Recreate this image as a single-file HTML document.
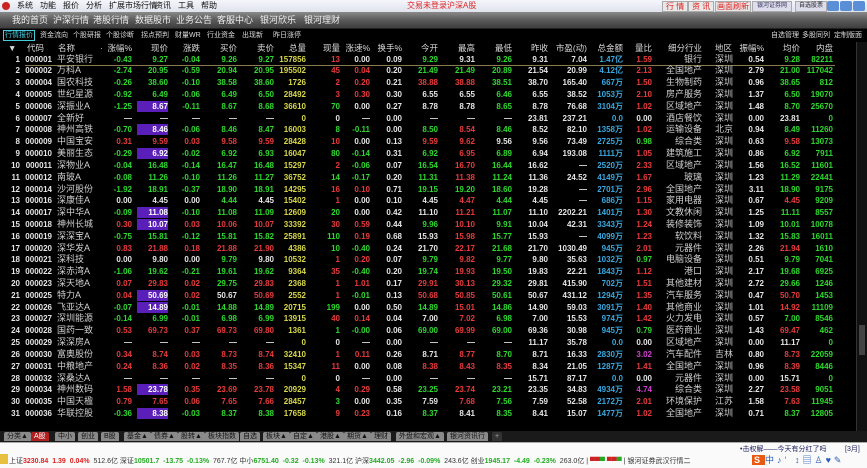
<!DOCTYPE html>
<html><head><meta charset="utf-8"><style>
*{margin:0;padding:0;box-sizing:border-box}
body{width:867px;height:468px;background:#000;overflow:hidden;position:relative;font-family:"Liberation Sans","Noto Sans CJK SC",sans-serif}
.menu{position:absolute;left:0;top:0;width:867px;height:12px;background:linear-gradient(#f4f6fb,#dfe3ec);font-size:8px;line-height:12px;color:#111}
.menu span{position:absolute;top:0;white-space:nowrap}
.tb{position:absolute;left:0;top:12px;width:867px;height:17px;background:linear-gradient(#8a8a8a,#5a5a5a 50%,#3e3e3e);border-bottom:1px solid #222}
.tb span{position:absolute;top:3px;font-size:9px;color:#f0f0f0;line-height:11px;white-space:nowrap}
.tabs{position:absolute;left:0;top:30px;width:867px;height:11px;font-size:7px;color:#ddd;line-height:11px}
.tabs span{position:absolute;top:0;white-space:nowrap}
.hdr{position:absolute;left:0;top:42px;width:867px;height:12px;font-size:8.5px;color:#d8d8d8;line-height:12px}
.hdr span,.row span{position:absolute;top:0;white-space:nowrap}
#tbl{position:absolute;left:0;top:53.6px;width:867px}
.row{position:relative;height:11.82px;line-height:11.82px;font-size:8px;font-weight:bold;color:#e6e6e6}
.row span:nth-child(3){font-weight:normal;font-size:9px;color:#d0d0d0}
.row span:nth-child(20),.row span:nth-child(21){font-weight:normal;font-size:9px;color:#d0d0d0}
.row span:nth-child(1){right:847px}.row span:nth-child(2){right:815px}.row span:nth-child(3){left:57px}
.row span:nth-child(4){right:735px}.row span:nth-child(5){right:699px}.row span:nth-child(6){right:667px}
.row span:nth-child(7){right:630px}.row span:nth-child(8){right:593px}.row span:nth-child(9){right:561px}
.row span:nth-child(10){right:527px}.row span:nth-child(11){right:497px}.row span:nth-child(12){right:465px}
.row span:nth-child(13){right:429px}.row span:nth-child(14){right:392px}.row span:nth-child(15){right:355px}
.row span:nth-child(16){right:319px}.row span:nth-child(17){right:280px}.row span:nth-child(18){right:244px}
.row span:nth-child(19){right:215px}.row span:nth-child(20){right:165px}.row span:nth-child(21){left:715px}
.row span:nth-child(22){right:103px}.row span:nth-child(23){right:67px}.row span:nth-child(24){right:34px}
.g{color:#2ed82e!important}.r{color:#e83a3a!important}.y{color:#d8d84a!important}.c{color:#3aa8e0!important}.m{color:#d040d0!important}
.row span.hl{background:#5a1fb8;width:31px;text-align:right;height:11px;color:#fff}
.line{position:absolute;left:25px;top:65px;width:810px;height:1px;background:#8a7a50}
.sb{position:absolute;left:856px;top:42px;width:11px;height:389px;background:#111;border-left:1px solid #333}
.btabs{position:absolute;left:0;top:431px;width:867px;height:11px;background:#1a1a1a;font-size:7px;line-height:9px}
.btabs span{position:absolute;top:1px;height:9px;background:#8a8a8a;color:#111;padding:0 3px;border-radius:2px 2px 0 0;white-space:nowrap}
.status{position:absolute;left:0;top:442px;width:867px;height:26px;background:#fafafa;border-top:1px solid #aaa}
.st{position:absolute;top:14px;font-size:7px;line-height:10px;color:#333;white-space:nowrap}
</style></head><body>
<div class="menu">
<span style="left:2px;top:2px;width:8px;height:8px;background:#c22;border-radius:50%"></span>
<span style="left:17px">系统</span><span style="left:40px">功能</span><span style="left:63px">报价</span><span style="left:86px">分析</span><span style="left:109px">扩展市场行情</span><span style="left:155px">资讯</span><span style="left:178px">工具</span><span style="left:201px">帮助</span>
<span style="left:407px;color:#d22">交易未登录</span><span style="left:447px;color:#d22">沪深A股</span>
<span style="left:662px;color:#d22;background:#e8e8e8;border:1px solid #aaa;line-height:9px;top:1px;padding:0 3px">行 情</span>
<span style="left:688px;color:#d22;background:#e8e8e8;border:1px solid #aaa;line-height:9px;top:1px;padding:0 3px">资 讯</span>
<span style="left:715px;color:#d22;background:#e8e8e8;border:1px solid #aaa;line-height:9px;top:1px;padding:0 1px">画面刷新</span>
<span style="left:752px;color:#335;background:#dde;border:1px solid #aaa;line-height:9px;top:1px;padding:0 4px;font-size:6px">银河证券网</span>
<span style="left:795px;color:#222;background:#dde;border:1px solid #aaa;line-height:9px;top:1px;padding:0 3px;font-size:6px">自选股票</span>
<span style="left:827px;top:1px;width:12px;height:10px;background:#5a8fd8;border-radius:2px"></span>
<span style="left:840px;top:1px;width:12px;height:10px;background:#5a8fd8;border-radius:2px"></span>
<span style="left:853px;top:1px;width:12px;height:10px;background:#5a8fd8;border-radius:2px"></span>
</div>
<div class="tb">
<span style="left:12px">我的首页</span><span style="left:53px">沪深行情</span><span style="left:93px">港股行情</span><span style="left:135px">数据股市</span><span style="left:176px">业务公告</span><span style="left:217px">客服中心</span><span style="left:260px">银河欣乐</span><span style="left:304px">银河理财</span>
</div>
<div class="tabs">
<span style="left:3px;color:#4cd;border:1px solid #4cd;line-height:9px;top:0;padding:0 1px">行情报价</span>
<span style="left:40px">资金流向</span><span style="left:73px">个股研报</span><span style="left:106px">个股诊断</span><span style="left:141px">拐点预判</span><span style="left:175px">财量WR</span><span style="left:207px">行业资金</span><span style="left:242px">出现新</span><span style="left:273px">昨日涨停</span>
<span style="left:771px">自选管理</span><span style="left:802px">多股同列</span><span style="left:834px">定制版面</span>
</div>
<div class="hdr">
<span style="left:8px">▼</span><span style="left:27px">代码</span><span style="left:58px">名称</span><span style="left:100px">·</span>
<span style="right:735px">涨幅%</span><span style="right:699px">现价</span><span style="right:667px">涨跌</span><span style="right:630px">买价</span><span style="right:593px">卖价</span><span style="right:561px">总量</span><span style="right:527px">现量</span><span style="right:497px">涨速%</span><span style="right:465px">换手%</span><span style="right:429px">今开</span><span style="right:392px">最高</span><span style="right:355px">最低</span><span style="right:319px">昨收</span><span style="right:280px">市盈(动)</span><span style="right:244px">总金额</span><span style="right:215px">量比</span><span style="right:165px">细分行业</span><span style="left:715px">地区</span><span style="right:103px">振幅%</span><span style="right:67px">均价</span><span style="right:34px">内盘</span>
</div>
<div class="line"></div>
<div id="tbl">
<div class="row"><span>1</span><span>000001</span><span>平安银行</span><span class="g">-0.43</span><span class="g">9.27</span><span class="g">-0.04</span><span class="g">9.26</span><span class="g">9.27</span><span class="y">157856</span><span class="r">13</span><span>0.00</span><span>0.09</span><span class="g">9.29</span><span>9.31</span><span class="g">9.26</span><span>9.31</span><span>7.04</span><span class="c">1.47亿</span><span class="r">1.59</span><span>银行</span><span>深圳</span><span>0.54</span><span class="g">9.28</span><span class="g">82211</span></div>
<div class="row"><span>2</span><span>000002</span><span>万科A</span><span class="g">-2.74</span><span class="g">20.95</span><span class="g">-0.59</span><span class="g">20.94</span><span class="g">20.95</span><span class="y">195502</span><span class="r">45</span><span class="r">0.04</span><span>0.20</span><span class="g">21.49</span><span class="g">21.49</span><span class="g">20.89</span><span>21.54</span><span>20.99</span><span class="c">4.12亿</span><span class="r">2.13</span><span>全国地产</span><span>深圳</span><span>2.79</span><span class="g">21.00</span><span class="g">117042</span></div>
<div class="row"><span>3</span><span>000004</span><span>国农科技</span><span class="g">-0.26</span><span class="g">38.60</span><span class="g">-0.10</span><span class="g">38.58</span><span class="g">38.60</span><span class="y">1726</span><span class="r">2</span><span class="r">0.20</span><span>0.21</span><span class="r">38.88</span><span class="r">38.88</span><span class="g">38.51</span><span>38.70</span><span>165.40</span><span class="c">667万</span><span class="r">1.50</span><span>生物制药</span><span>深圳</span><span>0.96</span><span class="g">38.65</span><span class="g">812</span></div>
<div class="row"><span>4</span><span>000005</span><span>世纪星源</span><span class="g">-0.92</span><span class="g">6.49</span><span class="g">-0.06</span><span class="g">6.49</span><span class="g">6.50</span><span class="y">28492</span><span class="r">3</span><span class="r">0.30</span><span>0.30</span><span>6.55</span><span>6.55</span><span class="g">6.46</span><span>6.55</span><span>38.52</span><span class="c">1053万</span><span class="r">2.10</span><span>房产服务</span><span>深圳</span><span>1.37</span><span class="g">6.50</span><span class="g">19070</span></div>
<div class="row"><span>5</span><span>000006</span><span>深振业A</span><span class="g">-1.25</span><span class="hl">8.67</span><span class="g">-0.11</span><span class="g">8.67</span><span class="g">8.68</span><span class="y">36610</span><span class="g">70</span><span>0.00</span><span>0.27</span><span>8.78</span><span>8.78</span><span class="g">8.65</span><span>8.78</span><span>76.68</span><span class="c">3104万</span><span class="r">1.02</span><span>区域地产</span><span>深圳</span><span>1.48</span><span class="g">8.70</span><span class="g">25670</span></div>
<div class="row"><span>6</span><span>000007</span><span>全新好</span><span>—</span><span>—</span><span>—</span><span>—</span><span>—</span><span class="y">0</span><span>0</span><span>—</span><span>0.00</span><span>—</span><span>—</span><span>—</span><span>23.81</span><span>237.21</span><span class="c">0.0</span><span>0.00</span><span>酒店餐饮</span><span>深圳</span><span>0.00</span><span>23.81</span><span class="g">0</span></div>
<div class="row"><span>7</span><span>000008</span><span>神州高铁</span><span class="g">-0.70</span><span class="hl">8.46</span><span class="g">-0.06</span><span class="g">8.46</span><span class="g">8.47</span><span class="y">16003</span><span class="g">8</span><span class="g">-0.11</span><span>0.00</span><span class="g">8.50</span><span class="r">8.54</span><span class="g">8.46</span><span>8.52</span><span>82.10</span><span class="c">1358万</span><span class="r">1.02</span><span>运输设备</span><span>北京</span><span>0.94</span><span class="g">8.49</span><span class="g">11260</span></div>
<div class="row"><span>8</span><span>000009</span><span>中国宝安</span><span class="r">0.31</span><span class="r">9.59</span><span class="r">0.03</span><span class="r">9.58</span><span class="r">9.59</span><span class="y">28428</span><span class="r">10</span><span>0.00</span><span>0.13</span><span class="r">9.59</span><span class="r">9.62</span><span>9.56</span><span>9.56</span><span>73.49</span><span class="c">2725万</span><span class="g">0.98</span><span>综合类</span><span>深圳</span><span>0.63</span><span class="r">9.58</span><span class="g">13073</span></div>
<div class="row"><span>9</span><span>000010</span><span>美丽生态</span><span class="g">-0.29</span><span class="hl">6.92</span><span class="g">-0.02</span><span class="g">6.92</span><span class="g">6.93</span><span class="y">16047</span><span class="g">80</span><span class="g">-0.14</span><span>0.31</span><span class="g">6.92</span><span class="r">6.95</span><span class="g">6.89</span><span>6.94</span><span>193.08</span><span class="c">1111万</span><span class="r">1.05</span><span>建筑施工</span><span>深圳</span><span>0.86</span><span class="g">6.92</span><span class="g">7911</span></div>
<div class="row"><span>10</span><span>000011</span><span>深物业A</span><span class="g">-0.04</span><span class="g">16.48</span><span class="g">-0.14</span><span class="g">16.47</span><span class="g">16.48</span><span class="y">15297</span><span class="r">2</span><span class="g">-0.06</span><span>0.07</span><span class="g">16.54</span><span class="r">16.70</span><span class="g">16.44</span><span>16.62</span><span>—</span><span class="c">2520万</span><span class="r">2.33</span><span>区域地产</span><span>深圳</span><span>1.56</span><span class="g">16.52</span><span class="g">11601</span></div>
<div class="row"><span>11</span><span>000012</span><span>南玻A</span><span class="g">-0.08</span><span class="g">11.26</span><span class="g">-0.10</span><span class="g">11.26</span><span class="g">11.27</span><span class="y">36752</span><span class="g">14</span><span class="g">-0.17</span><span>0.20</span><span class="g">11.31</span><span class="r">11.38</span><span class="g">11.24</span><span>11.36</span><span>24.52</span><span class="c">4149万</span><span class="r">1.67</span><span>玻璃</span><span>深圳</span><span>1.23</span><span class="g">11.29</span><span class="g">22441</span></div>
<div class="row"><span>12</span><span>000014</span><span>沙河股份</span><span class="g">-1.92</span><span class="g">18.91</span><span class="g">-0.37</span><span class="g">18.90</span><span class="g">18.91</span><span class="y">14295</span><span class="r">16</span><span class="r">0.10</span><span>0.71</span><span class="g">19.15</span><span class="g">19.20</span><span class="g">18.60</span><span>19.28</span><span>—</span><span class="c">2701万</span><span class="r">2.96</span><span>全国地产</span><span>深圳</span><span>3.11</span><span class="g">18.90</span><span class="g">9175</span></div>
<div class="row"><span>13</span><span>000016</span><span>深康佳A</span><span>0.00</span><span>4.45</span><span>0.00</span><span class="g">4.44</span><span>4.45</span><span class="y">15402</span><span class="r">1</span><span>0.00</span><span>0.10</span><span>4.45</span><span class="r">4.47</span><span class="g">4.44</span><span>4.45</span><span>—</span><span class="c">686万</span><span class="r">1.15</span><span>家用电器</span><span>深圳</span><span>0.67</span><span class="r">4.45</span><span class="g">9209</span></div>
<div class="row"><span>14</span><span>000017</span><span>深中华A</span><span class="g">-0.09</span><span class="hl">11.08</span><span class="g">-0.10</span><span class="g">11.08</span><span class="g">11.09</span><span class="y">12609</span><span class="g">20</span><span>0.00</span><span>0.42</span><span>11.10</span><span class="r">11.21</span><span class="g">11.07</span><span>11.10</span><span>2202.21</span><span class="c">1401万</span><span class="r">1.30</span><span>文教休闲</span><span>深圳</span><span>1.25</span><span class="g">11.11</span><span class="g">8557</span></div>
<div class="row"><span>15</span><span>000018</span><span>神州长城</span><span class="r">0.30</span><span class="hl">10.07</span><span class="r">0.03</span><span class="r">10.06</span><span class="r">10.07</span><span class="y">33392</span><span class="r">30</span><span class="r">0.59</span><span>0.44</span><span class="g">9.96</span><span class="r">10.10</span><span class="g">9.91</span><span>10.04</span><span>42.31</span><span class="c">3343万</span><span class="r">1.24</span><span>装修装饰</span><span>深圳</span><span>1.09</span><span class="g">10.01</span><span class="g">10078</span></div>
<div class="row"><span>16</span><span>000019</span><span>深深宝A</span><span class="g">-0.75</span><span class="g">15.81</span><span class="g">-0.12</span><span class="g">15.81</span><span class="g">15.82</span><span class="y">25891</span><span class="g">110</span><span class="r">0.19</span><span>0.68</span><span>15.93</span><span class="r">15.98</span><span class="g">15.77</span><span>15.93</span><span>—</span><span class="c">4099万</span><span class="r">1.23</span><span>软饮料</span><span>深圳</span><span>1.32</span><span class="g">15.83</span><span class="g">16011</span></div>
<div class="row"><span>17</span><span>000020</span><span>深华发A</span><span class="r">0.83</span><span class="r">21.88</span><span class="r">0.18</span><span class="r">21.88</span><span class="r">21.90</span><span class="y">4386</span><span class="g">10</span><span class="g">-0.40</span><span>0.24</span><span>21.70</span><span class="r">22.17</span><span class="g">21.68</span><span>21.70</span><span>1030.49</span><span class="c">945万</span><span class="r">2.01</span><span>元器件</span><span>深圳</span><span>2.26</span><span class="r">21.94</span><span class="g">1610</span></div>
<div class="row"><span>18</span><span>000021</span><span>深科技</span><span>0.00</span><span>9.80</span><span>0.00</span><span class="g">9.79</span><span>9.80</span><span class="y">10532</span><span class="r">1</span><span class="r">0.20</span><span>0.07</span><span class="g">9.79</span><span class="r">9.82</span><span class="g">9.77</span><span>9.80</span><span>35.63</span><span class="c">1032万</span><span class="g">0.97</span><span>电脑设备</span><span>深圳</span><span>0.51</span><span class="g">9.79</span><span class="g">7041</span></div>
<div class="row"><span>19</span><span>000022</span><span>深赤湾A</span><span class="g">-1.06</span><span class="g">19.62</span><span class="g">-0.21</span><span class="g">19.61</span><span class="g">19.62</span><span class="y">9364</span><span class="r">35</span><span class="g">-0.40</span><span>0.20</span><span class="g">19.74</span><span class="r">19.93</span><span class="g">19.50</span><span>19.83</span><span>22.21</span><span class="c">1843万</span><span class="r">1.12</span><span>港口</span><span>深圳</span><span>2.17</span><span class="g">19.68</span><span class="g">6925</span></div>
<div class="row"><span>20</span><span>000023</span><span>深天地A</span><span class="r">0.07</span><span class="r">29.83</span><span class="r">0.02</span><span class="g">29.75</span><span class="r">29.83</span><span class="y">2368</span><span class="r">1</span><span class="r">1.01</span><span>0.17</span><span class="r">29.91</span><span class="r">30.13</span><span class="g">29.32</span><span>29.81</span><span>415.90</span><span class="c">702万</span><span class="r">1.51</span><span>其他建材</span><span>深圳</span><span>2.72</span><span class="g">29.66</span><span class="g">1246</span></div>
<div class="row"><span>21</span><span>000025</span><span>特力A</span><span class="r">0.04</span><span class="hl">50.69</span><span class="r">0.02</span><span>50.67</span><span class="r">50.69</span><span class="y">2552</span><span class="r">1</span><span class="g">-0.01</span><span>0.13</span><span class="r">50.68</span><span class="r">50.85</span><span class="g">50.61</span><span>50.67</span><span>431.12</span><span class="c">1294万</span><span class="r">1.35</span><span>汽车服务</span><span>深圳</span><span>0.47</span><span class="r">50.70</span><span class="g">1453</span></div>
<div class="row"><span>22</span><span>000026</span><span>飞亚达A</span><span class="g">-0.07</span><span class="hl">14.89</span><span class="g">-0.01</span><span class="g">14.88</span><span class="g">14.89</span><span class="y">20715</span><span class="g">199</span><span>0.00</span><span>0.50</span><span class="g">14.89</span><span class="r">15.01</span><span class="g">14.86</span><span>14.90</span><span>59.03</span><span class="c">3091万</span><span class="r">1.40</span><span>其他商业</span><span>深圳</span><span>1.01</span><span class="r">14.92</span><span class="g">11109</span></div>
<div class="row"><span>23</span><span>000027</span><span>深圳能源</span><span class="g">-0.14</span><span class="g">6.99</span><span class="g">-0.01</span><span class="g">6.98</span><span class="g">6.99</span><span class="y">13915</span><span class="r">40</span><span class="r">0.14</span><span>0.04</span><span>7.00</span><span class="r">7.02</span><span class="g">6.98</span><span>7.00</span><span>15.53</span><span class="c">974万</span><span class="r">1.42</span><span>火力发电</span><span>深圳</span><span>0.57</span><span class="g">7.00</span><span class="g">8546</span></div>
<div class="row"><span>24</span><span>000028</span><span>国药一致</span><span class="r">0.53</span><span class="r">69.73</span><span class="r">0.37</span><span class="r">69.73</span><span class="r">69.80</span><span class="y">1361</span><span class="g">1</span><span class="g">-0.00</span><span>0.06</span><span class="g">69.00</span><span class="r">69.99</span><span class="g">69.00</span><span>69.36</span><span>30.98</span><span class="c">945万</span><span class="g">0.79</span><span>医药商业</span><span>深圳</span><span>1.43</span><span class="r">69.47</span><span class="g">462</span></div>
<div class="row"><span>25</span><span>000029</span><span>深深房A</span><span>—</span><span>—</span><span>—</span><span>—</span><span>—</span><span class="y">0</span><span>0</span><span>—</span><span>0.00</span><span>—</span><span>—</span><span>—</span><span>11.17</span><span>35.78</span><span class="c">0.0</span><span>0.00</span><span>区域地产</span><span>深圳</span><span>0.00</span><span>11.17</span><span class="g">0</span></div>
<div class="row"><span>26</span><span>000030</span><span>富奥股份</span><span class="r">0.34</span><span class="r">8.74</span><span class="r">0.03</span><span class="r">8.73</span><span class="r">8.74</span><span class="y">32410</span><span class="r">1</span><span class="r">0.11</span><span>0.26</span><span>8.71</span><span class="r">8.77</span><span class="g">8.70</span><span>8.71</span><span>16.33</span><span class="c">2830万</span><span class="m">3.02</span><span>汽车配件</span><span>吉林</span><span>0.80</span><span class="r">8.73</span><span class="g">22059</span></div>
<div class="row"><span>27</span><span>000031</span><span>中粮地产</span><span class="r">0.24</span><span class="r">8.36</span><span class="r">0.02</span><span class="r">8.35</span><span class="r">8.36</span><span class="y">15347</span><span class="r">11</span><span>0.00</span><span>0.08</span><span class="r">8.38</span><span class="r">8.43</span><span class="r">8.35</span><span>8.34</span><span>21.05</span><span class="c">1287万</span><span class="r">1.41</span><span>全国地产</span><span>深圳</span><span>0.96</span><span class="r">8.39</span><span class="g">8446</span></div>
<div class="row"><span>28</span><span>000032</span><span>深桑达A</span><span>—</span><span>—</span><span>—</span><span>—</span><span>—</span><span class="y">0</span><span>0</span><span>—</span><span>0.00</span><span>—</span><span>—</span><span>—</span><span>15.71</span><span>87.17</span><span class="c">0.0</span><span>0.00</span><span>元器件</span><span>深圳</span><span>0.00</span><span>15.71</span><span class="g">0</span></div>
<div class="row"><span>29</span><span>000034</span><span>神州数码</span><span class="r">1.58</span><span class="hl">23.78</span><span class="r">0.35</span><span class="r">23.69</span><span class="r">23.78</span><span class="y">20929</span><span class="r">4</span><span class="r">0.29</span><span>0.58</span><span class="g">23.25</span><span class="r">23.74</span><span class="g">23.21</span><span>23.35</span><span>34.83</span><span class="c">4934万</span><span class="m">4.74</span><span>综合类</span><span>深圳</span><span>2.27</span><span class="r">23.58</span><span class="g">9051</span></div>
<div class="row"><span>30</span><span>000035</span><span>中国天楹</span><span class="r">0.79</span><span class="r">7.65</span><span class="r">0.06</span><span class="r">7.65</span><span class="r">7.66</span><span class="y">28457</span><span class="g">3</span><span>0.00</span><span>0.35</span><span>7.59</span><span class="r">7.68</span><span class="g">7.56</span><span>7.59</span><span>52.58</span><span class="c">2172万</span><span class="r">2.01</span><span>环境保护</span><span>江苏</span><span>1.58</span><span class="r">7.63</span><span class="g">11945</span></div>
<div class="row"><span>31</span><span>000036</span><span>华联控股</span><span class="g">-0.36</span><span class="hl">8.38</span><span class="g">-0.03</span><span class="g">8.37</span><span class="g">8.38</span><span class="y">17658</span><span class="r">9</span><span class="r">0.23</span><span>0.16</span><span class="g">8.37</span><span>8.41</span><span class="g">8.35</span><span>8.41</span><span>15.07</span><span class="c">1477万</span><span class="r">1.02</span><span>全国地产</span><span>深圳</span><span>0.71</span><span class="g">8.37</span><span class="g">12805</span></div>
</div>
<div class="sb"><div style="position:absolute;left:2px;top:283px;width:6px;height:30px;background:#444"></div></div>
<div class="btabs">
<span style="left:4px">分类▲</span><span style="left:31px;background:#b02020;color:#fff">A股</span><span style="left:55px">中小</span><span style="left:78px">创业</span><span style="left:101px">B股</span><span style="left:124px">基金▲</span><span style="left:151px">债券▲</span><span style="left:178px">股转▲</span><span style="left:205px">板块指数</span><span style="left:240px">自选</span><span style="left:263px">板块▲</span><span style="left:290px">自定▲</span><span style="left:317px">港股▲</span><span style="left:344px">期货▲</span><span style="left:371px">理财</span><span style="left:396px">外盘和宏观▲</span><span style="left:447px">银河资讯行</span><span style="left:492px;background:#333;color:#aaa">+</span>
</div>
<div class="status">
<div class="st" style="left:0;top:11px;width:8px;height:10px;background:#e8c040"></div>
<div class="st" style="left:9px">上证<b style="color:#d22">3230.84</b>&nbsp; <b style="color:#d22">1.39</b>&nbsp; <b style="color:#d22">0.04%</b>&nbsp; 512.6亿 深证<b style="color:#2a2">10501.7</b>&nbsp; <b style="color:#2a2">-13.75</b>&nbsp; <b style="color:#2a2">-0.13%</b>&nbsp; 767.7亿 中小<b style="color:#2a2">6751.40</b>&nbsp; <b style="color:#2a2">-0.32</b>&nbsp; <b style="color:#2a2">-0.13%</b>&nbsp; 321.1亿 沪深<b style="color:#2a2">3442.05</b>&nbsp; <b style="color:#2a2">-2.96</b>&nbsp; <b style="color:#2a2">-0.09%</b>&nbsp; 243.6亿 创业<b style="color:#2a2">1945.17</b>&nbsp; <b style="color:#2a2">-4.49</b>&nbsp; <b style="color:#2a2">-0.23%</b>&nbsp; 263.0亿 | <b style="color:#c22">▀▀</b><b style="color:#2a2">▀</b> <b style="color:#c22">▀▀</b><b style="color:#2a2">▀</b> | 银河证券武汉行情二</div>
<div class="st" style="left:740px;top:2px;color:#226">•击权解——今天有分红了吗</div>
<div class="st" style="left:845px;top:2px;color:#226">[3月]</div>
<div class="st" style="left:752px;top:12px;width:115px;height:13px;font-size:9px;color:#2a5bb8;letter-spacing:3px"><b style="color:#fff;background:#e85a10;padding:0 2px">S</b>中♪‘ ↕▤♙♥✎</div>
</div>
</body></html>
